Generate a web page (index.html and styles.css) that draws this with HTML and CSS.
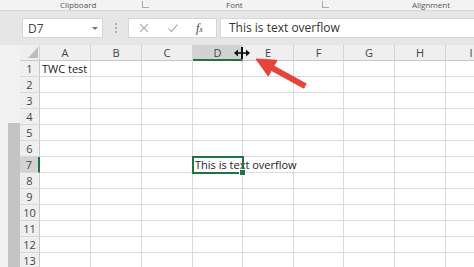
FILE: index.html
```html
<!DOCTYPE html>
<html lang="en">
<head>
  <meta charset="UTF-8">
  <meta name="viewport" content="width=device-width, initial-scale=1.0">
  <title>Text overflow</title>
  <link rel="stylesheet" href="styles.css">
</head>
<body>
  <div class="app">
    <div class="ribbon">
      <span class="group g-clip">Clipboard</span>
      <span class="launch l-clip"></span>
      <span class="group g-font">Font</span>
      <span class="launch l-font"></span>
      <span class="group g-align">Alignment</span>
    </div>

    <div class="fbar">
      <div class="namebox">
        <span>D7</span>
        <span class="caret"></span>
      </div>
      <div class="grip"><i></i><i></i><i></i></div>
      <div class="fbuttons">
        <svg width="12" height="12" viewBox="0 0 12 12"><path d="M2 2 L10 10 M10 2 L2 10" stroke="#b4b4b4" stroke-width="1.2" fill="none"/></svg>
        <svg width="12" height="12" viewBox="0 0 12 12"><path d="M1.5 6.5 L4.5 9.5 L10.5 2.5" stroke="#b4b4b4" stroke-width="1.2" fill="none"/></svg>
        <span class="fx">f<small>x</small></span>
      </div>
      <div class="finput">This is text overflow</div>
    </div>

    <div class="main">
      <div class="gutter"><div class="scroll"></div></div>
      <div class="sheet">
        <div class="hd corner"><svg width="10" height="11" viewBox="0 0 10 11"><polygon points="10,0 10,11 0,11" fill="#bdbdbd"/></svg></div>
        <div class="hd">A</div><div class="hd">B</div><div class="hd">C</div><div class="hd sel-col">D</div><div class="hd">E</div><div class="hd">F</div><div class="hd">G</div><div class="hd">H</div><div class="hd">I</div>

        <div class="rh">1</div><div class="c txt">TWC test</div><div class="c"></div><div class="c"></div><div class="c"></div><div class="c"></div><div class="c"></div><div class="c"></div><div class="c"></div><div class="c"></div>
        <div class="rh">2</div><div class="c"></div><div class="c"></div><div class="c"></div><div class="c"></div><div class="c"></div><div class="c"></div><div class="c"></div><div class="c"></div><div class="c"></div>
        <div class="rh">3</div><div class="c"></div><div class="c"></div><div class="c"></div><div class="c"></div><div class="c"></div><div class="c"></div><div class="c"></div><div class="c"></div><div class="c"></div>
        <div class="rh">4</div><div class="c"></div><div class="c"></div><div class="c"></div><div class="c"></div><div class="c"></div><div class="c"></div><div class="c"></div><div class="c"></div><div class="c"></div>
        <div class="rh">5</div><div class="c"></div><div class="c"></div><div class="c"></div><div class="c"></div><div class="c"></div><div class="c"></div><div class="c"></div><div class="c"></div><div class="c"></div>
        <div class="rh">6</div><div class="c"></div><div class="c"></div><div class="c"></div><div class="c"></div><div class="c"></div><div class="c"></div><div class="c"></div><div class="c"></div><div class="c"></div>
        <div class="rh sel-row">7</div><div class="c"></div><div class="c"></div><div class="c"></div><div class="c txt active">This is text overflow<span class="handle"></span></div><div class="c"></div><div class="c"></div><div class="c"></div><div class="c"></div><div class="c"></div>
        <div class="rh">8</div><div class="c"></div><div class="c"></div><div class="c"></div><div class="c"></div><div class="c"></div><div class="c"></div><div class="c"></div><div class="c"></div><div class="c"></div>
        <div class="rh">9</div><div class="c"></div><div class="c"></div><div class="c"></div><div class="c"></div><div class="c"></div><div class="c"></div><div class="c"></div><div class="c"></div><div class="c"></div>
        <div class="rh">10</div><div class="c"></div><div class="c"></div><div class="c"></div><div class="c"></div><div class="c"></div><div class="c"></div><div class="c"></div><div class="c"></div><div class="c"></div>
        <div class="rh">11</div><div class="c"></div><div class="c"></div><div class="c"></div><div class="c"></div><div class="c"></div><div class="c"></div><div class="c"></div><div class="c"></div><div class="c"></div>
        <div class="rh">12</div><div class="c"></div><div class="c"></div><div class="c"></div><div class="c"></div><div class="c"></div><div class="c"></div><div class="c"></div><div class="c"></div><div class="c"></div>
        <div class="rh">13</div><div class="c"></div><div class="c"></div><div class="c"></div><div class="c"></div><div class="c"></div><div class="c"></div><div class="c"></div><div class="c"></div><div class="c"></div>
      </div>
    </div>

    <!-- resize cursor + annotation arrow drawn over the sheet -->
    <svg class="overlay" width="474" height="267" viewBox="0 0 474 267">
      <rect x="241" y="47" width="2" height="12" fill="#111"/>
      <path d="M235 53 H249" stroke="#111" stroke-width="1.6"/>
      <polygon points="234,53 238,49.5 238,56.5" fill="#111"/>
      <polygon points="250,53 246,49.5 246,56.5" fill="#111"/>
      <polygon points="256,59 277,60.3 273.8,66 306.2,83.8 303.8,88.2 271.4,70.4 268.3,76.1" fill="#e8423c" stroke="#e8423c" stroke-width="1" stroke-linejoin="round"/>
    </svg>
  </div>
</body>
</html>
```

FILE: styles.css
```css
body {
  margin: 0;
  font-family: "Open Sans", "Noto Sans", sans-serif;
  color: #333;
  background: #fff;
}
.app {
  position: relative;
  width: 474px;
  height: 267px;
  overflow: hidden;
}
.ribbon {
  position: relative;
  height: 10px;
  background: #f3f3f3;
  border-bottom: 1px solid #d8d8d8;
  font-size: 8px;
  line-height: 10px;
  color: #555;
}
.group, .launch {
  position: absolute;
  top: 0;
}
.g-clip { left: 60px; }
.g-font { left: 226px; }
.g-align { left: 412px; }
.launch {
  top: 1px;
  width: 6px;
  height: 6px;
  border-left: 1px solid #aaa;
  border-bottom: 1px solid #aaa;
}
.l-clip { left: 142px; }
.l-font { left: 322px; }
.fbar {
  display: flex;
  align-items: center;
  height: 34px;
  padding-left: 22px;
  background: #e6e6e6;
}
.namebox {
  display: flex;
  align-items: center;
  justify-content: space-between;
  box-sizing: border-box;
  width: 81px;
  height: 20px;
  padding: 0 4px 0 5px;
  background: #fff;
  border: 1px solid #d6d6d6;
  font-size: 12px;
  color: #444;
}
.caret {
  width: 0;
  height: 0;
  border-left: 3px solid transparent;
  border-right: 3px solid transparent;
  border-top: 3px solid #777;
}
.grip {
  display: flex;
  flex-direction: column;
  gap: 2px;
  margin: 0 11px 0 12px;
}
.grip i {
  width: 2px;
  height: 2px;
  background: #b0b0b0;
}
.fbuttons {
  display: flex;
  align-items: center;
  box-sizing: border-box;
  width: 89px;
  height: 20px;
  padding-left: 9px;
  gap: 17px;
  background: #fff;
  border: 1px solid #d6d6d6;
}
.fx {
  font-family: "Liberation Serif", serif;
  font-style: italic;
  font-size: 12px;
  color: #444;
}
.fx small {
  font-size: 8px;
}
.finput {
  flex: 1;
  box-sizing: border-box;
  height: 20px;
  margin-left: 3px;
  padding-left: 8px;
  background: #fff;
  border: 1px solid #d6d6d6;
  border-right: none;
  font-size: 12px;
  line-height: 18px;
  color: #333;
  white-space: nowrap;
}
.main {
  display: flex;
}
.gutter {
  flex: 0 0 20px;
  height: 222px;
  background: #f2f2f2;
}
.scroll {
  margin: 78px 0 0 8px;
  height: 144px;
  background: #c4c4c4;
}
.sheet {
  display: grid;
  grid-template-columns: 20px 51px 51px 51px 50px 51px 50px 51px 51px 51px;
  grid-auto-rows: 16px;
  background: #fff;
}
.hd {
  box-sizing: border-box;
  background: #efefef;
  border-right: 1px solid #d4d4d4;
  border-bottom: 1px solid #c8c8c8;
  text-align: center;
  font-size: 11px;
  line-height: 15px;
  color: #444;
}
.corner {
  display: flex;
  justify-content: flex-end;
  align-items: flex-end;
  padding: 0 1px 2px 0;
}
.sel-col {
  background: #d2d2d2;
  border-bottom: 2px solid #217346;
}
.rh {
  box-sizing: border-box;
  background: #efefef;
  border-right: 1px solid #c8c8c8;
  border-bottom: 1px solid #d8d8d8;
  text-align: center;
  font-size: 11px;
  line-height: 15px;
  color: #444;
}
.sel-row {
  background: #d2d2d2;
  border-right: 2px solid #217346;
}
.c {
  box-sizing: border-box;
  border-right: 1px solid #dadada;
  border-bottom: 1px solid #dadada;
}
.txt {
  position: relative;
  padding-left: 2px;
  font-size: 11px;
  line-height: 15px;
  color: #222;
  white-space: nowrap;
}
.active {
  outline: 2px solid #217346;
  outline-offset: -1px;
  z-index: 1;
}
.handle {
  position: absolute;
  right: -4px;
  bottom: -4px;
  width: 5px;
  height: 5px;
  background: #217346;
  border: 1px solid #fff;
}
.overlay {
  position: absolute;
  left: 0;
  top: 0;
  pointer-events: none;
}
```
